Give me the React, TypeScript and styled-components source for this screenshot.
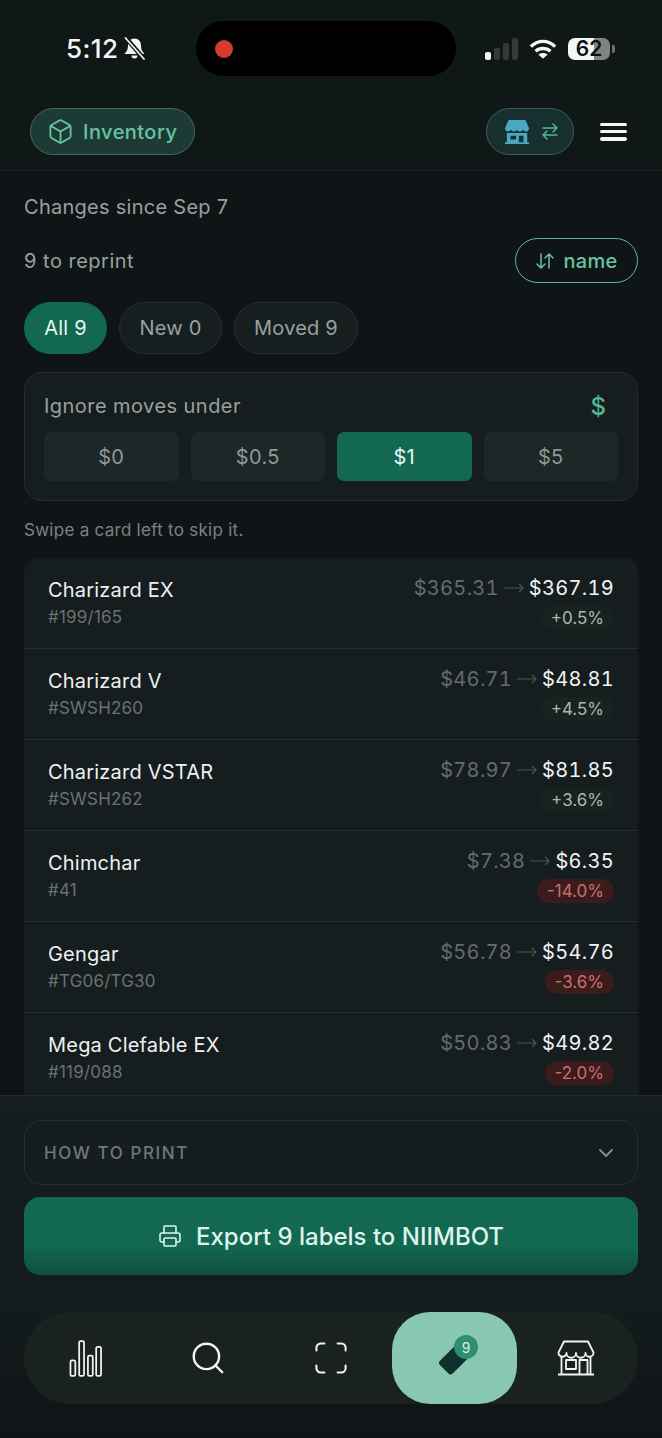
import React from 'react';
import styled, { createGlobalStyle } from 'styled-components';
import { Box, ChevronDown, Printer, Search } from 'lucide-react';

const cards = [
  { name: 'Charizard EX', num: '#199/165', from: '$365.31', to: '$367.19', pct: '+0.5%', down: false },
  { name: 'Charizard V', num: '#SWSH260', from: '$46.71', to: '$48.81', pct: '+4.5%', down: false },
  { name: 'Charizard VSTAR', num: '#SWSH262', from: '$78.97', to: '$81.85', pct: '+3.6%', down: false },
  { name: 'Chimchar', num: '#41', from: '$7.38', to: '$6.35', pct: '-14.0%', down: true },
  { name: 'Gengar', num: '#TG06/TG30', from: '$56.78', to: '$54.76', pct: '-3.6%', down: true },
  { name: 'Mega Clefable EX', num: '#119/088', from: '$50.83', to: '$49.82', pct: '-2.0%', down: true },
];

const App: React.FC = () => (
  <>
    <GlobalStyle />
    <Screen>
      <StatusBar>
        <Clock>
          <Time>5:12</Time>
          <svg width="23" height="23" viewBox="0 0 23 23" fill="none">
            <path d="M11.500 1.500c-4 0-6.500 3-6.500 7 0 4-1 5.500-3.500 8.500h20c-2.500-3-3.500-4.500-3.500-8.500 0-4-2.500-7-6.500-7z" fill="#f4f6f5" />
            <path d="M8.500 18.500a3 3 0 0 0 6 0z" fill="#f4f6f5" />
            <path d="M3 1l18 21" stroke="#101817" strokeWidth="4.500" />
            <path d="M2.500 1l18.500 21" stroke="#f4f6f5" strokeWidth="1.700" strokeLinecap="round" />
          </svg>
        </Clock>
        <Island>
          <RecDot />
        </Island>
        <StatusIcons>
          <svg width="33" height="22" viewBox="0 0 33 22">
            <rect x="0" y="14" width="6" height="8" rx="2" fill="#f4f6f5" />
            <rect x="9" y="10" width="6" height="12" rx="2" fill="#333a39" />
            <rect x="18" y="5" width="6" height="17" rx="2" fill="#333a39" />
            <rect x="27" y="0" width="6" height="22" rx="2" fill="#333a39" />
          </svg>
          <svg width="28" height="22" viewBox="0 0 30 22" fill="none" stroke="#f4f6f5" strokeWidth="3.600" strokeLinecap="butt">
            <path d="M2 8.500C9.500 1 20.500 1 28 8.500" />
            <path d="M7 13.500C11.500 9.500 18.500 9.500 23 13.500" />
            <path d="M15 21.500l-5-4.600c3-2.200 7-2.200 10 0z" fill="#f4f6f5" stroke="none" />
          </svg>
          <Battery>
            <BatteryLevel>62</BatteryLevel>
            <BatteryCap />
          </Battery>
        </StatusIcons>
      </StatusBar>

      <Header>
        <InventoryPill>
          <Box size={27} strokeWidth={1.600} />
          Inventory
        </InventoryPill>
        <HeaderRight>
          <StorePill>
            <svg width="28" height="26" viewBox="0 0 28 28">
              <path d="M5 1h18l4 9c0 2-1.500 3.500-3.200 3.500S21 12 20.500 11.500c-.8 1.200-2 2-3.300 2s-2.500-.8-3.200-2c-.7 1.200-1.900 2-3.200 2s-2.500-.8-3.300-2C7 12 5.900 13.500 4.200 13.500S1 12 1 10z" fill="#4aa8c4" />
              <path fillRule="evenodd" d="M3 15h22v10h2v2H1v-2h2zm4 3v4h6v-4zm9 0v7h5v-7z" fill="#4aa8c4" />
            </svg>
            <svg width="16" height="17" viewBox="0 0 16 17" fill="none" stroke="#4fb795" strokeWidth="1.500" strokeLinecap="round" strokeLinejoin="round">
              <path d="M1 5h14M11 1l4 4-4 4" />
              <path d="M15 12H1M5 8l-4 4 4 4" />
            </svg>
          </StorePill>
          <Burger>
            <BurgerLine />
            <BurgerLine />
            <BurgerLine />
          </Burger>
        </HeaderRight>
      </Header>

      <Content>
        <Since>Changes since Sep 7</Since>
        <CountRow>
          <Count>9 to reprint</Count>
          <SortButton>
            <svg width="20" height="20" viewBox="0 0 20 20" fill="none" stroke="currentColor" strokeWidth="1.500" strokeLinecap="round" strokeLinejoin="round">
              <path d="M6 3v14M2 13l4 4 4-4" />
              <path d="M14 17V3M10 7l4-4 4 4" />
            </svg>
            name
          </SortButton>
        </CountRow>
        <Filters>
          <FilterPill $active $width={83}>All 9</FilterPill>
          <FilterPill $width={103}>New 0</FilterPill>
          <FilterPill $width={124}>Moved 9</FilterPill>
        </Filters>
        <ThresholdPanel>
          <ThresholdHead>
            <ThresholdLabel>Ignore moves under</ThresholdLabel>
            <DollarMark>$</DollarMark>
          </ThresholdHead>
          <ThresholdGrid>
            <ThresholdOption>$0</ThresholdOption>
            <ThresholdOption>$0.5</ThresholdOption>
            <ThresholdOption $active>$1</ThresholdOption>
            <ThresholdOption>$5</ThresholdOption>
          </ThresholdGrid>
        </ThresholdPanel>
        <Hint>Swipe a card left to skip it.</Hint>
        <CardList>
          {cards.map((card) => (
            <CardRow key={card.name}>
              <div>
                <CardName>{card.name}</CardName>
                <CardNumber>{card.num}</CardNumber>
              </div>
              <PriceCol>
                <PriceLine>
                  <OldPrice>{card.from}</OldPrice>
                  <svg width="20" height="10" viewBox="0 0 20 10" fill="none" stroke="#4c5554" strokeWidth="1.200">
                    <path d="M0 5h19M15 1l4 4-4 4" />
                  </svg>
                  <NewPrice>{card.to}</NewPrice>
                </PriceLine>
                <Delta $down={card.down}>{card.pct}</Delta>
              </PriceCol>
            </CardRow>
          ))}
        </CardList>
      </Content>

      <Footer>
        <HowTo>
          <HowToLabel>HOW TO PRINT</HowToLabel>
          <ChevronDown size={24} strokeWidth={1.800} color="#87918f" />
        </HowTo>
        <ExportButton>
          <Printer size={24} strokeWidth={1.600} />
          Export 9 labels to NIIMBOT
        </ExportButton>
        <Nav>
          <NavItem>
            <svg width="33" height="37" viewBox="0 0 34 38" fill="none" stroke="#f1f4f3" strokeWidth="1.800">
              <rect x="1.500" y="21" width="5" height="16" rx="1.500" />
              <rect x="10.500" y="1" width="5" height="36" rx="1.500" />
              <rect x="19.500" y="16" width="5" height="21" rx="1.500" />
              <rect x="28" y="7" width="5" height="30" rx="1.500" />
            </svg>
          </NavItem>
          <NavItem>
            <Search size={38} strokeWidth={1.500} color="#f1f4f3" />
          </NavItem>
          <NavItem>
            <svg width="32" height="32" viewBox="0 0 34 34" fill="none" stroke="#f1f4f3" strokeWidth="2.200" strokeLinecap="round">
              <path d="M1.500 9V6a4.500 4.500 0 0 1 4.500-4.500h4M24 1.500h4A4.500 4.500 0 0 1 32.500 6v3M32.500 25v3a4.500 4.500 0 0 1-4.500 4.500h-4M10 32.500H6A4.500 4.500 0 0 1 1.500 28v-3" />
            </svg>
          </NavItem>
          <ActiveNavItem>
            <TagIcon viewBox="0 0 40 40" width="40" height="40">
              <rect x="4.500" y="12" width="32" height="18" rx="3" transform="rotate(-45 20.500 21)" fill="#10302e" />
            </TagIcon>
            <TagBadge>9</TagBadge>
          </ActiveNavItem>
          <StoreNavItem>
            <svg width="38" height="36" viewBox="0 0 38 36" fill="none" stroke="#f1f4f3" strokeWidth="1.800" strokeLinejoin="round">
              <path d="M7 1.500h24l5.500 11a4 4 0 0 1-8 .5 4.500 4.500 0 0 1-9.500 0 4.500 4.500 0 0 1-9.500 0 4 4 0 0 1-8-.5z" />
              <path d="M4.500 17v17M33.500 17v17M1 34.500h36" />
              <rect x="9" y="20" width="10" height="9" />
              <path d="M22.500 34V20h8v14" />
            </svg>
          </StoreNavItem>
        </Nav>
      </Footer>
    </Screen>
  </>
);

const GlobalStyle = createGlobalStyle`
  html, body {
    margin: 0;
    padding: 0;
    background: #0f1516;
  }
  * {
    box-sizing: border-box;
  }
`;

const Screen = styled.div`
  width: 662px;
  height: 1438px;
  display: flex;
  flex-direction: column;
  overflow: hidden;
  background: #0f1516;
  font-family: Inter, 'Noto Sans', sans-serif;
  color: #f1f4f3;
`;

const StatusBar = styled.div`
  height: 108px;
  flex: none;
  padding: 21px 0 0 66px;
  display: flex;
  align-items: flex-start;
  background: #101817;
`;

const Clock = styled.div`
  width: 130px;
  height: 55px;
  display: flex;
  align-items: center;
  gap: 5px;
`;

const Time = styled.span`
  font-size: 26px;
  font-weight: 500;
  letter-spacing: 0.4px;
  color: #f4f6f5;
`;

const Island = styled.div`
  width: 260px;
  height: 55px;
  border-radius: 28px;
  background: #000;
  display: flex;
  align-items: center;
  padding-left: 19px;
`;

const RecDot = styled.div`
  width: 18px;
  height: 18px;
  border-radius: 50%;
  background: #d63b2f;
`;

const StatusIcons = styled.div`
  height: 55px;
  margin-left: 29px;
  display: flex;
  align-items: center;
  gap: 11px;
`;

const Battery = styled.div`
  position: relative;
  width: 42px;
  height: 22px;
  border-radius: 7px;
  display: flex;
  align-items: center;
  justify-content: center;
  background: linear-gradient(90deg, #f4f6f5 0 62%, #7f8583 62% 100%);
`;

const BatteryLevel = styled.span`
  font-size: 21px;
  font-weight: 600;
  color: #0c100f;
`;

const BatteryCap = styled.div`
  position: absolute;
  right: -5px;
  top: 7px;
  width: 3px;
  height: 8px;
  border-radius: 0 2px 2px 0;
  background: #6a706e;
`;

const Header = styled.div`
  height: 63px;
  flex: none;
  padding: 0 35px 16px 30px;
  display: flex;
  align-items: flex-start;
  justify-content: space-between;
  background: #101817;
  border-bottom: 1px solid #1a2221;
`;

const InventoryPill = styled.div`
  width: 165px;
  height: 47px;
  border-radius: 24px;
  display: flex;
  align-items: center;
  gap: 9px;
  padding-left: 16px;
  background: #1d3b35;
  border: 1px solid #46695f;
  color: #69c3a3;
  font-size: 20px;
  font-weight: 500;
  letter-spacing: 0.45px;
`;

const HeaderRight = styled.div`
  display: flex;
  align-items: center;
  gap: 26px;
`;

const StorePill = styled.div`
  width: 88px;
  height: 47px;
  border-radius: 24px;
  display: flex;
  align-items: center;
  gap: 11px;
  padding-left: 16px;
  background: #17302f;
  border: 1px solid #3f5f5b;
`;

const Burger = styled.div`
  width: 27px;
  height: 18px;
  display: flex;
  flex-direction: column;
  justify-content: space-between;
`;

const BurgerLine = styled.div`
  height: 3.5px;
  border-radius: 2px;
  background: #f4f6f5;
`;

const Content = styled.div`
  flex: 1;
  min-height: 0;
  padding: 0 24px;
  display: flex;
  flex-direction: column;
  overflow: hidden;
`;

const Since = styled.div`
  margin-top: 23px;
  height: 26px;
  line-height: 26px;
  font-size: 20px;
  letter-spacing: 0.27px;
  color: #98a19f;
`;

const CountRow = styled.div`
  margin-top: 18px;
  height: 45px;
  display: flex;
  align-items: center;
  justify-content: space-between;
`;

const Count = styled.div`
  font-size: 20px;
  letter-spacing: 0.5px;
  color: #98a19f;
`;

const SortButton = styled.div`
  width: 123px;
  height: 45px;
  border-radius: 23px;
  border: 1.5px solid #5bb79a;
  display: flex;
  align-items: center;
  justify-content: center;
  gap: 8px;
  color: #69c3a3;
  font-size: 20px;
  font-weight: 500;
  letter-spacing: 0.3px;
`;

const Filters = styled.div`
  margin-top: 19px;
  display: flex;
  gap: 12px;
`;

const FilterPill = styled.div<{ $active?: boolean; $width: number }>`
  width: ${({ $width }) => $width}px;
  height: 52px;
  border-radius: 26px;
  display: flex;
  align-items: center;
  justify-content: center;
  font-size: 20px;
  letter-spacing: 0.2px;
  background: ${({ $active }) => ($active ? '#126850' : '#171e1f')};
  border: 1px solid ${({ $active }) => ($active ? '#126850' : '#272f30')};
  color: ${({ $active }) => ($active ? '#e6f5ef' : '#98a19f')};
`;

const ThresholdPanel = styled.div`
  margin-top: 18px;
  height: 129px;
  flex: none;
  border-radius: 18px;
  border: 1px solid #252d2e;
  background: #161d1f;
  padding: 19px 19px 0;
`;

const ThresholdHead = styled.div`
  height: 28px;
  display: flex;
  align-items: center;
  justify-content: space-between;
  padding-right: 12px;
`;

const ThresholdLabel = styled.div`
  font-size: 20px;
  letter-spacing: 0.45px;
  color: #98a19f;
`;

const DollarMark = styled.div`
  font-size: 24px;
  font-weight: 500;
  color: #4fb795;
`;

const ThresholdGrid = styled.div`
  margin-top: 12px;
  display: grid;
  grid-template-columns: repeat(4, 1fr);
  gap: 12px;
`;

const ThresholdOption = styled.div<{ $active?: boolean }>`
  height: 49px;
  border-radius: 7px;
  display: flex;
  align-items: center;
  justify-content: center;
  font-size: 20px;
  letter-spacing: 0.3px;
  background: ${({ $active }) => ($active ? '#126850' : '#1e2728')};
  color: ${({ $active }) => ($active ? '#e6f5ef' : '#8e9896')};
`;

const Hint = styled.div`
  margin-top: 18px;
  height: 22px;
  line-height: 22px;
  font-size: 17px;
  letter-spacing: 0.27px;
  color: #7a8482;
`;

const CardList = styled.div`
  margin-top: 17px;
  flex: 1;
  min-height: 0;
  overflow: hidden;
  border-radius: 14px 14px 0 0;
  background: #161d1f;
`;

const CardRow = styled.div`
  height: 91px;
  padding: 14px 24px 0;
  display: flex;
  justify-content: space-between;
  align-items: flex-start;
  border-bottom: 1px solid #262e2f;
`;

const CardName = styled.div`
  margin-top: 4px;
  font-size: 20px;
  line-height: 29px;
  letter-spacing: 0.2px;
  color: #eef1f0;
`;

const CardNumber = styled.div`
  font-size: 17px;
  line-height: 24px;
  letter-spacing: 0.2px;
  color: #69726f;
`;

const PriceCol = styled.div`
  display: flex;
  flex-direction: column;
  align-items: flex-end;
`;

const PriceLine = styled.div`
  display: flex;
  align-items: center;
  gap: 5px;
  height: 32px;
  font-size: 20px;
  font-variant-numeric: tabular-nums;
  letter-spacing: 0.3px;
`;

const OldPrice = styled.span`
  color: #636c6a;
`;

const NewPrice = styled.span`
  color: #f1f4f3;
`;

const Delta = styled.div<{ $down: boolean }>`
  margin-top: 2px;
  height: 24px;
  padding: 0 10px;
  border-radius: 12px;
  display: flex;
  align-items: center;
  font-size: 17px;
  background: ${({ $down }) => ($down ? '#3c1b1d' : '#17231e')};
  color: ${({ $down }) => ($down ? '#c8706c' : '#a9b8b1')};
`;

const Footer = styled.div`
  height: 343px;
  flex: none;
  padding: 24px 24px 0;
  border-top: 1px solid #232b2c;
  background: linear-gradient(180deg, #161d1f 0%, #141b1c 60%, #0f1516 100%);
`;

const HowTo = styled.div`
  height: 65px;
  border-radius: 18px;
  border: 1px solid #272f30;
  padding: 0 19px;
  display: flex;
  align-items: center;
  justify-content: space-between;
`;

const HowToLabel = styled.div`
  font-size: 17px;
  font-weight: 500;
  letter-spacing: 1.6px;
  color: #6f7977;
`;

const ExportButton = styled.div`
  margin-top: 12px;
  height: 78px;
  border-radius: 16px;
  display: flex;
  align-items: center;
  justify-content: center;
  gap: 14px;
  font-size: 24px;
  font-weight: 500;
  color: #dff3ec;
  background: linear-gradient(180deg, #126850 0%, #126850 62%, #0f4f40 100%);
`;

const Nav = styled.div`
  margin-top: 37px;
  height: 92px;
  border-radius: 46px;
  background: #1a2220;
  display: grid;
  grid-template-columns: 123px 122px 123px 125px 1fr;
`;

const NavItem = styled.div`
  display: flex;
  align-items: center;
  justify-content: center;
`;

const StoreNavItem = styled(NavItem)`
  padding-right: 3px;
`;

const ActiveNavItem = styled(NavItem)`
  position: relative;
  border-radius: 38px;
  background: #88c8b1;
`;

const TagIcon = styled.svg`
  margin-top: -2px;
`;

const TagBadge = styled.div`
  position: absolute;
  left: 62px;
  top: 23px;
  width: 24px;
  height: 24px;
  border-radius: 50%;
  display: flex;
  align-items: center;
  justify-content: center;
  background: #2e8f6f;
  color: #d6efe6;
  font-size: 14px;
`;

export default App;
